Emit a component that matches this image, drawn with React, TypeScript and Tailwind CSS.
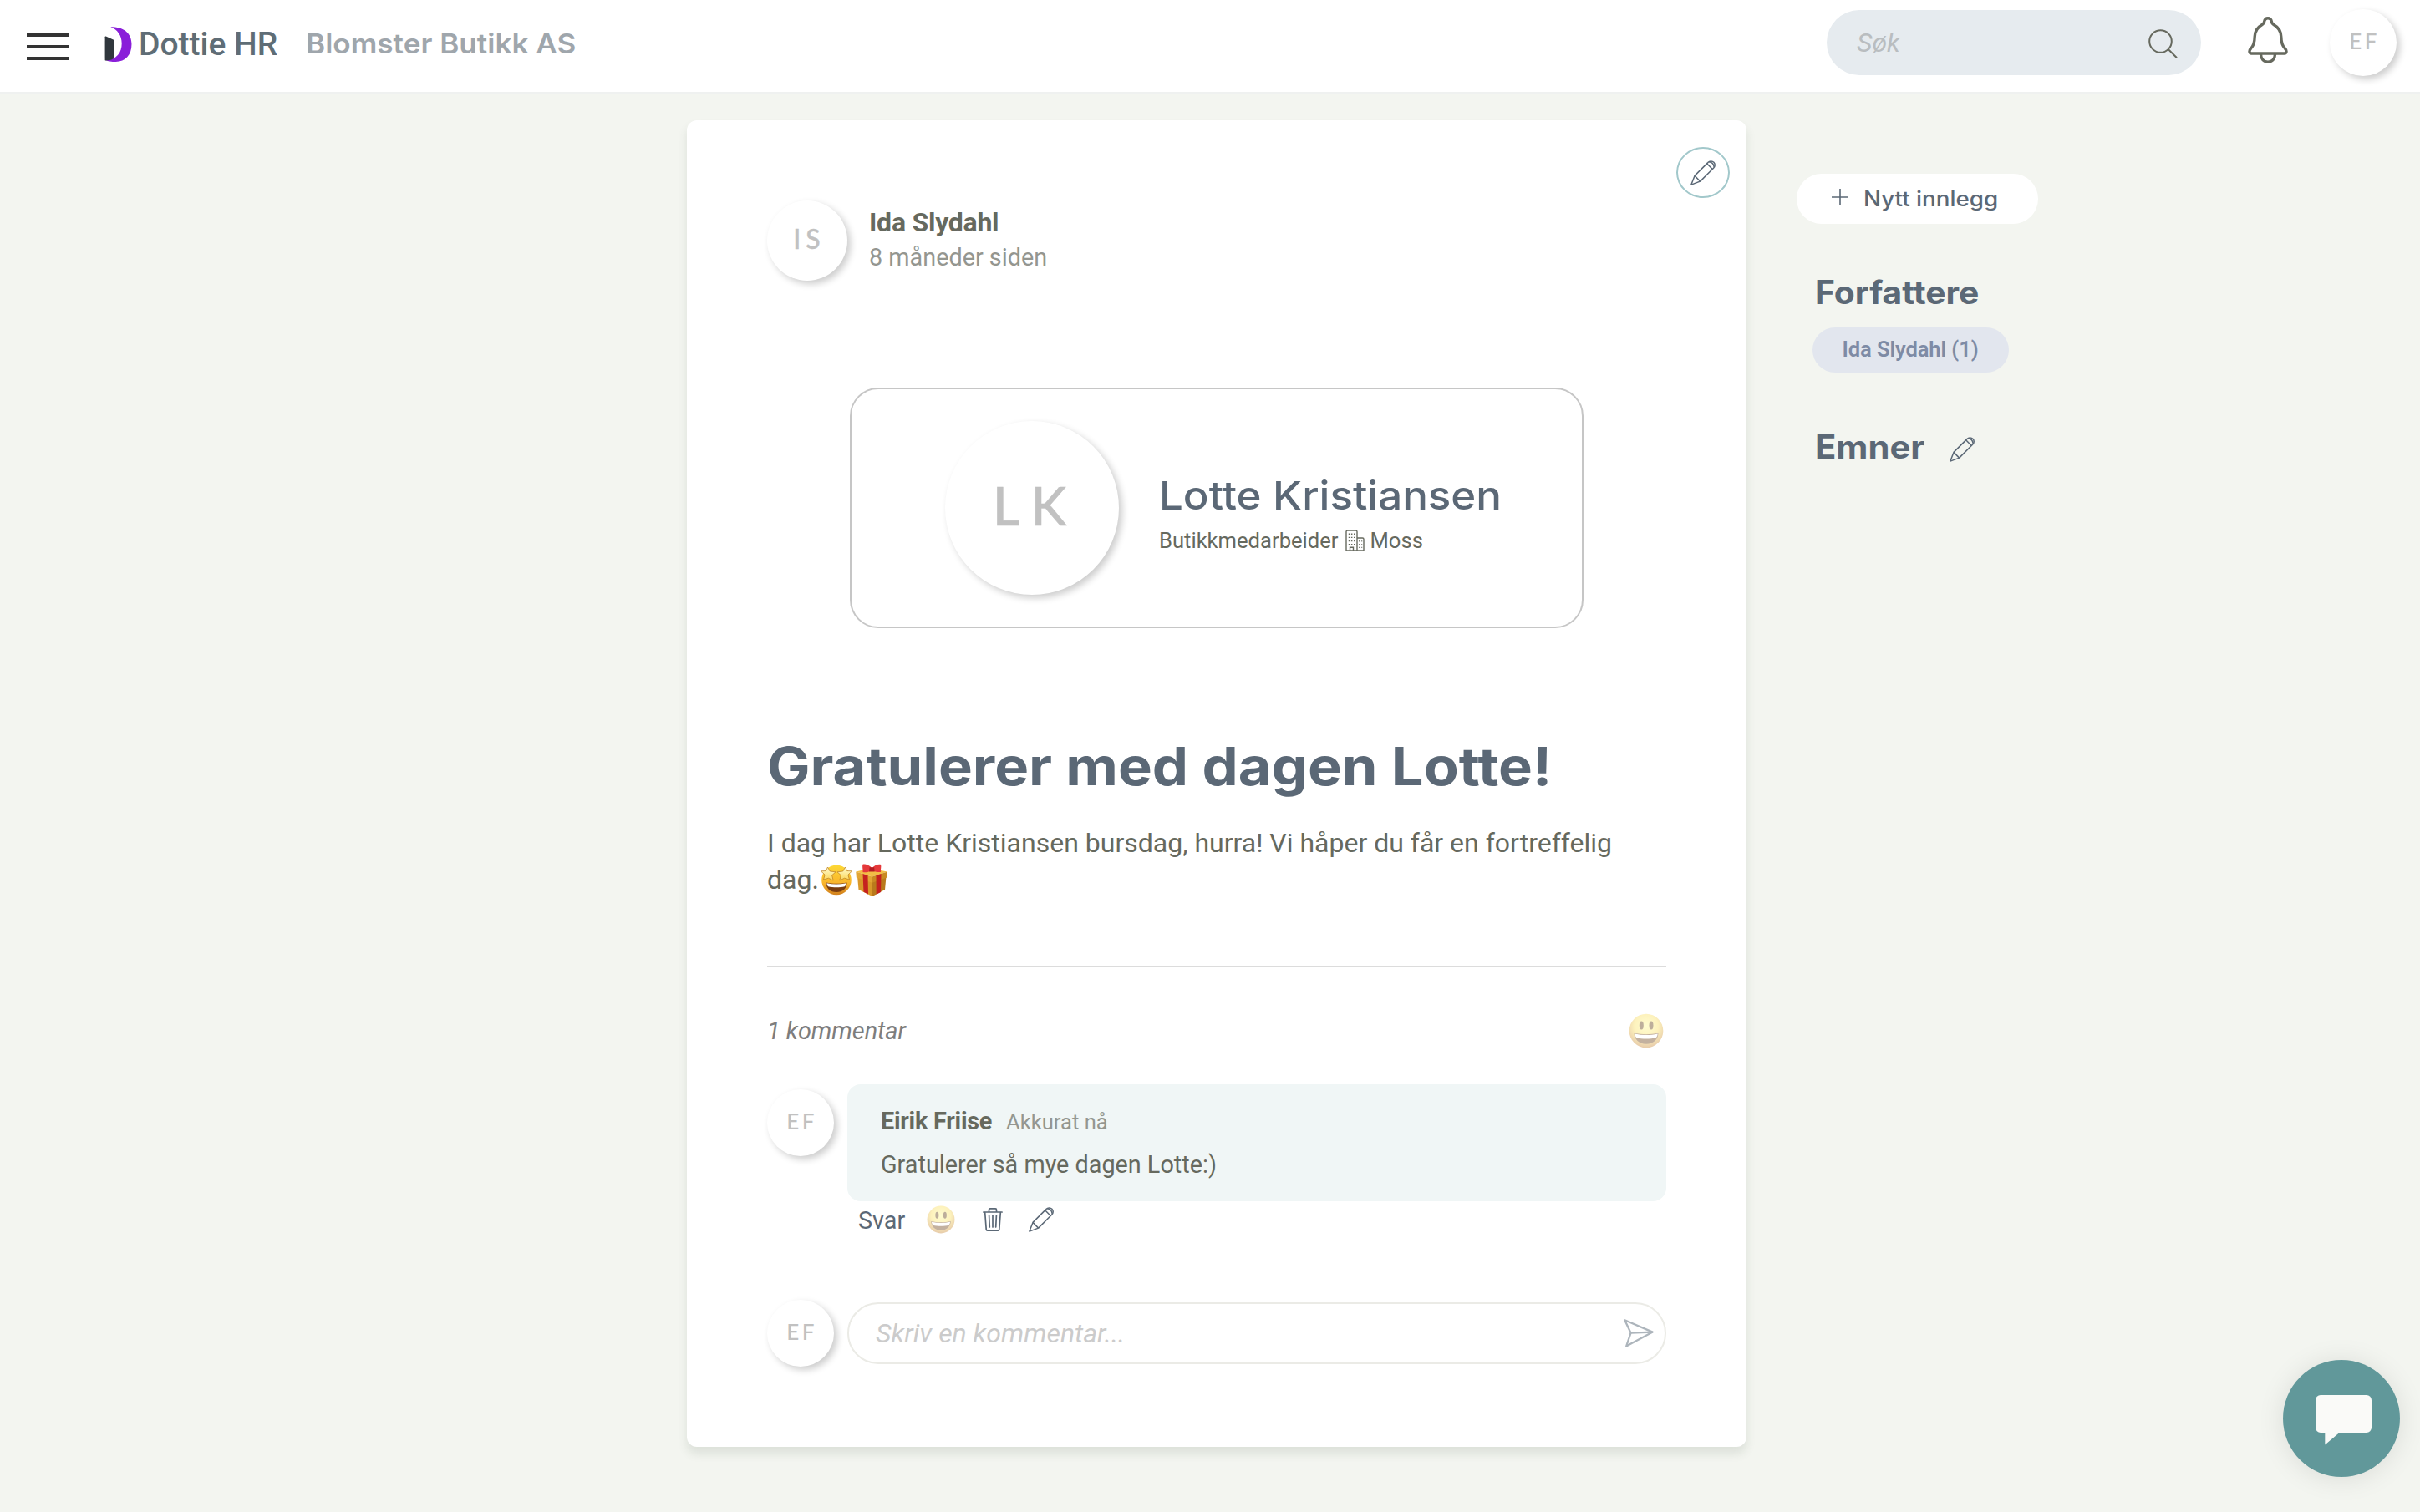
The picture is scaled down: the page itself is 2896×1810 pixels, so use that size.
import clsx from 'clsx'

type IconProps = {
  className?: string
}

const PencilIcon = ({ className }: IconProps) => (
  <svg
    viewBox="0 0 30 30"
    fill="none"
    stroke="currentColor"
    strokeWidth="1.5"
    strokeLinejoin="round"
    className={clsx('size-[30px] shrink-0', className)}
  >
    <path d="M.9 29.1 5 18.4 20.8 2.6C22.9.4 26 .4 27.9 2.3c1.8 1.8 1.8 4.9-.4 7L11.6 25.1Z" />
    <path d="m5 18.4 6.6 6.7M19.6 3.8l6.7 6.7M22.2 1.8c3.3.4 5.5 2.7 6 6" />
  </svg>
)

const BellIcon = ({ className }: IconProps) => (
  <svg
    viewBox="0 0 48 56"
    fill="none"
    stroke="currentColor"
    strokeWidth="3.4"
    strokeLinejoin="round"
    className={className}
  >
    <path d="M24 1.8c-2.7 0-4 2-4.5 4.6-.3 1.4-.9 2-2 2.8C11 12.8 8.3 17 8.2 24c-.1 7-.9 10.5-4.6 14-2.5 2.8-2 6 .6 6h39.6c2.6 0 3.1-3.2.6-6-3.7-3.5-4.5-7-4.6-14-.1-7-2.8-11.2-9.3-14.8-1.1-.8-1.7-1.4-2-2.8C28 3.8 26.7 1.8 24 1.8Z" />
    <path d="M15.5 45c0 5.5 3.5 9.3 8.5 9.3s8.5-3.8 8.5-9.3" />
  </svg>
)

const SearchIcon = ({ className }: IconProps) => (
  <svg
    viewBox="0 0 35 35"
    fill="none"
    stroke="currentColor"
    strokeWidth="2"
    strokeLinecap="round"
    className={className}
  >
    <circle cx="14.5" cy="14.5" r="13.3" />
    <path d="m24 24.2 9.5 9.6" />
  </svg>
)

const TrashIcon = ({ className }: IconProps) => (
  <svg
    viewBox="0 0 24 28"
    fill="none"
    stroke="currentColor"
    strokeWidth="1.7"
    strokeLinecap="round"
    strokeLinejoin="round"
    className={className}
  >
    <path d="M.9 5h22.2M7.5 4.6V2.2c0-.8.5-1.3 1.3-1.3h6.4c.8 0 1.3.5 1.3 1.3v2.4" />
    <path d="M2.7 5.5 4.2 25.6c.1 1 .7 1.5 1.5 1.5h12.6c.8 0 1.4-.5 1.5-1.5L21.3 5.5" />
    <path d="m7.6 9 .7 14M12 9v14M16.4 9l-.7 14" />
  </svg>
)

const SendIcon = ({ className }: IconProps) => (
  <svg
    viewBox="0 0 36 34"
    fill="none"
    stroke="currentColor"
    strokeWidth="2.3"
    strokeLinejoin="round"
    className={className}
  >
    <path d="M1.3 1.3 34.7 15.6 3.2 32.5 8.5 16.6Z" />
    <path d="m8.5 16.6 26.2-1" />
  </svg>
)

const BuildingIcon = ({ className }: IconProps) => (
  <svg
    viewBox="0 0 23 26"
    fill="none"
    stroke="currentColor"
    strokeWidth="1.4"
    className={className}
  >
    <path d="M1 25V2.5C1 1.5 1.5 1 2.5 1h10c1 0 1.5.5 1.5 1.5V25M14 10h6.5c1 0 1.5.5 1.5 1.5V25H.7M5.5 25v-3.8h4V25" />
    <path
      d="M3.8 5.2h7.8M3.8 9.4h7.8M3.8 13.6h7.8M3.8 17.8h7.8M16.2 13.8h4M16.2 17.6h4M16.2 21.4h4"
      strokeDasharray="1.5 1.6"
    />
  </svg>
)

const DottieLogo = ({ className }: IconProps) => (
  <svg viewBox="0 0 34 42" className={className}>
    <path
      fill="#8a1fd9"
      d="M7.3.2C23 .2 32.5 7.5 32.5 20.8 32.5 34 25 42 13.5 42 8.5 42 4 41.3 1.2 40.5 14.5 39.8 20.7 31 20.7 20 20.7 10 15.5 3.5 7.3.2Z"
    />
    <path
      fill="#30373d"
      d="M.6 12.3c0-.8.5-1.1 1.2-.8l9.3 4.3c.6.3.9.7.9 1.3v20.2C9.5 39.5 6.5 40.6 2 40.6c-.9 0-1.4-.4-1.4-1.2Z"
    />
  </svg>
)

const SmileEmoji = ({ className }: IconProps) => (
  <svg viewBox="0 0 42 42" className={clsx('opacity-40', className)}>
    <defs>
      <radialGradient id="smile" cx="50%" cy="36%" r="64%">
        <stop offset="0" stopColor="#fff98c" />
        <stop offset=".55" stopColor="#fbdf5a" />
        <stop offset="1" stopColor="#c47f2c" />
      </radialGradient>
    </defs>
    <circle cx="21" cy="21" r="20.3" fill="url(#smile)" />
    <ellipse cx="15.3" cy="14.5" rx="2.5" ry="5" fill="#5c3608" />
    <ellipse cx="27" cy="14.5" rx="2.5" ry="5" fill="#5c3608" />
    <path
      d="M6.5 23.5c9 2.2 20 2.2 29 0 0 7.5-6 13.3-14.5 13.3S6.5 31 6.5 23.5Z"
      fill="#6b3f12"
    />
    <path
      d="M7.3 24.4c9 2 18.500 2 27.4 0-.3 2.5-1 4-2.2 4.8-6.5 1.8-16.5 1.8-23 0-1.2-.8-1.9-2.3-2.2-4.8Z"
      fill="#fff"
    />
  </svg>
)

const StarEyesEmoji = ({ className }: IconProps) => (
  <svg viewBox="0 0 38 38" className={className}>
    <defs>
      <linearGradient id="star-face" x1="0" y1="0" x2="0" y2="1">
        <stop offset="0" stopColor="#fdd835" />
        <stop offset=".6" stopColor="#f9b52c" />
        <stop offset="1" stopColor="#d07f1c" />
      </linearGradient>
      <linearGradient id="star-eye" x1="0" y1="0" x2="0" y2="1">
        <stop offset="0" stopColor="#fffbd0" />
        <stop offset="1" stopColor="#fbd75a" />
      </linearGradient>
    </defs>
    <circle cx="19" cy="19.5" r="17.8" fill="url(#star-face)" />
    <path
      d="M6.5 22.5c8 1.8 17 1.8 25 0C31.5 29.5 26.5 34 19 34S6.5 29.5 6.5 22.5Z"
      fill="#7a3d10"
    />
    <path
      d="M7.4 23.3c8 1.6 15.2 1.6 23.2 0-.2 2-.8 3.3-1.8 3.9-6 1.5-13.6 1.5-19.6 0-1-.6-1.6-1.9-1.8-3.9Z"
      fill="#fff"
    />
    <path
      d="m8.5 4 2.7 5 6.8.8-4.4 4 1.6 6.2-5.8-2.8L3.5 19l1.7-5.8L.3 8.7l6-.1ZM29.5 4l-2.7 5-6.8.8 4.4 4-1.6 6.2 5.8-2.8 5.9 1.8-1.7-5.8 4.9-4.5-6-.1Z"
      fill="url(#star-eye)"
      stroke="#b87a22"
      strokeWidth=".7"
      strokeLinejoin="round"
    />
  </svg>
)

const GiftEmoji = ({ className }: IconProps) => (
  <svg viewBox="0 0 38 39" className={className}>
    <path d="M2 15 20 22v17L3.5 31Z" fill="#d9982a" />
    <path d="M36.5 15 20 22v17l15-8Z" fill="#b97a1c" />
    <path d="M.3 9.5 17 5.5l21 4-18.3 6Z" fill="#f2bd45" />
    <path d="M.3 9.5 19.7 15.5v7.2L.8 16.5Z" fill="#e2a534" />
    <path d="M38 9.5 19.7 15.5v7.2l17.7-6.2Z" fill="#c98a22" />
    <path d="m8.5 12 6 2 .5 22.5-5.5-2.7ZM24.5 14l6-2-.5 22-5.3 2.8Z" fill="#c5221f" />
    <path
      d="M19.5 5.5C17 2 11 0 8.5.8c-1 2.2.4 6.2 0 9.2 4 1 8-.2 11-2.5 3 1.8 6 3 10.5 2.5-.5-3 1-6.5 0-9C27 0 22 2 19.5 5.5Z"
      fill="#e5393b"
    />
    <path d="M16.5 4.3h5.6l.6 5.2h-6.6Z" fill="#b31b21" />
  </svg>
)

type AvatarProps = {
  initials: string
  size?: 'sm' | 'md' | 'lg'
  className?: string
}

const avatarSizes = {
  sm: 'size-20 text-[26px] tracking-[3.5px] pl-[3px] pb-[3px]',
  md: 'size-24 text-[32px] tracking-[6px] pl-[5px] pb-[4px] [-webkit-text-stroke:0.4px_#c1c1c1]',
  lg: 'size-[208px] text-[64px] tracking-[13px] pl-[7px] pb-[6px] [-webkit-text-stroke:0.5px_#c1c1c1]',
}

const Avatar = ({ initials, size = 'sm', className }: AvatarProps) => (
  <div
    className={clsx(
      'flex shrink-0 items-center justify-center rounded-full bg-white font-[Lato,sans-serif] font-medium text-[#c1c1c1] shadow-[4px_4px_8px_rgba(0,0,0,0.2)]',
      avatarSizes[size],
      className
    )}
  >
    {initials}
  </div>
)

const Header = () => (
  <header className="flex h-[112px] items-start border-b-2 border-[#eff1f0] bg-white pr-7 pl-8">
    <button type="button" aria-label="Meny" className="mt-10 flex flex-col gap-2.5">
      <span className="h-1 w-[50px] bg-[#333]" />
      <span className="h-1 w-[50px] bg-[#333]" />
      <span className="h-1 w-[50px] bg-[#333]" />
    </button>
    <DottieLogo className="mt-8 ml-[43px] h-[42px] w-[34px]" />
    <span className="mt-[29px] ml-[7px] w-[167px] text-[39px] leading-[48px] font-medium whitespace-nowrap text-[#5f6d76]">
      Dottie HR
    </span>
    <span className="mt-[33px] ml-[33px] origin-left scale-x-[1.097] font-[Inter,sans-serif] text-[32px] leading-10 font-semibold whitespace-nowrap text-[#9fa6ac]">
      Blomster Butikk AS
    </span>

    <div className="mt-3 ml-auto flex h-[78px] w-[448px] items-center justify-between rounded-full bg-[#e6ebef] pr-7 pl-9">
      <span className="text-[32px] text-[#b9bdc0] italic">Søk</span>
      <SearchIcon className="mt-[3px] size-[35px] text-[#66695e]" />
    </div>
    <BellIcon className="mt-5 ml-14 h-14 w-12 text-[#66695e]" />
    <Avatar initials="EF" className="mt-[11px] ml-[50px]" />
  </header>
)

const BirthdayCard = () => (
  <div className="mt-32 ml-[99px] flex h-72 w-[878px] items-start rounded-[34px] border-2 border-[#c6c6c6] pl-[112px]">
    <Avatar initials="LK" size="lg" className="mt-[38px]" />
    <div className="mt-[98px] ml-12 whitespace-nowrap">
      <h2 className="w-fit origin-left scale-x-[1.086] font-[Inter,sans-serif] text-[47px] leading-[58px] font-medium text-[#5b6876]">
        Lotte Kristiansen
      </h2>
      <p className="flex items-center text-[25.6px] leading-[50px]">
        Butikkmedarbeider
        <BuildingIcon className="mr-[7px] ml-2 h-[26px] w-[23px]" />
        Moss
      </p>
    </div>
  </div>
)

const Comment = () => (
  <div className="mt-[43px] flex items-start gap-4">
    <Avatar initials="EF" className="mt-1.5" />
    <div className="flex-1">
      <div className="h-[140px] rounded-2xl bg-[#f0f6f6] px-10 pt-6">
        <div className="flex items-baseline text-[28.8px] leading-[41px]">
          <span className="font-bold tracking-[-0.25px]">Eirik Friise</span>
          <span className="ml-[17px] text-[25.6px] text-[#949690]">Akkurat nå</span>
        </div>
        <p className="mt-2.5 text-[28.8px] leading-10">Gratulerer så mye dagen Lotte:)</p>
      </div>
      <div className="flex h-11 items-center pl-[13px] text-[#5b6876]">
        <span className="w-[82px] pt-[3px] text-[28.8px]">Svar</span>
        <SmileEmoji className="size-[34px]" />
        <TrashIcon className="ml-[33px] h-7 w-6" />
        <PencilIcon className="ml-[31px]" />
      </div>
    </div>
  </div>
)

const CommentField = () => (
  <div className="mt-[74px] flex items-center gap-4">
    <Avatar initials="EF" />
    <div className="flex h-[74px] flex-1 items-center justify-between rounded-full border-2 border-[#ebebe6] pr-[13px] pl-8">
      <span className="text-[32px] text-[#cbcbcb] italic">Skriv en kommentar...</span>
      <SendIcon className="h-[34px] w-9 text-[#adb5bc]" />
    </div>
  </div>
)

const Post = () => (
  <article className="relative mt-8 h-[1588px] w-[1268px] rounded-xl bg-white px-24 pt-24 shadow-[0_8px_12px_rgba(60,80,60,0.12)]">
    <button
      type="button"
      aria-label="Rediger"
      className="absolute top-8 right-5 flex h-[61px] w-16 items-center justify-center rounded-[50%] border-2 border-[#a2c8cb] text-[#5b6876]"
    >
      <PencilIcon />
    </button>

    <div className="flex">
      <Avatar initials="IS" size="md" />
      <div className="ml-[26px] pt-[5px] leading-[42px]">
        <p className="text-[32px] font-bold tracking-[-0.25px]">Ida Slydahl</p>
        <p className="text-[28.8px] text-[#949690]">8 måneder siden</p>
      </div>
    </div>

    <BirthdayCard />

    <h1 className="mt-[125px] w-fit origin-left scale-x-[1.09] font-[Inter,sans-serif] text-[63px] leading-20 font-bold whitespace-nowrap text-[#5b6876]">
      Gratulerer med dagen Lotte!
    </h1>
    <p className="mt-[30px] text-[32px] leading-11">
      I dag har Lotte Kristiansen bursdag, hurra! Vi håper du får en fortreffelig
      <span className="flex h-11 items-center">
        dag.
        <StarEyesEmoji className="ml-0.5 size-[38px]" />
        <GiftEmoji className="ml-1 h-[39px] w-[38px]" />
      </span>
    </p>

    <hr className="mt-[81px] border-t-2 border-[#dcdcdc]" />

    <div className="mt-[55px] flex h-[42px] items-center justify-between pr-[3px]">
      <span className="pt-0.5 text-[28.8px] text-[#7d7d7d] italic">1 kommentar</span>
      <SmileEmoji className="size-[42px]" />
    </div>

    <Comment />
    <CommentField />
  </article>
)

type SectionTitleProps = {
  title: string
  className?: string
}

const SectionTitle = ({ title, className }: SectionTitleProps) => (
  <h3
    className={clsx(
      'w-fit origin-left font-[Inter,sans-serif] text-[39px] leading-12 font-bold whitespace-nowrap text-[#5b6876]',
      className
    )}
  >
    {title}
  </h3>
)

const Sidebar = () => (
  <aside className="ml-15 w-[300px] pt-24 text-[#5b6876]">
    <button
      type="button"
      className="flex h-[60px] w-[289px] items-center rounded-full bg-white pl-[42px] font-[Inter,sans-serif] text-[25px] font-medium whitespace-nowrap"
    >
      <svg
        viewBox="0 0 20 20"
        stroke="currentColor"
        strokeWidth="1.6"
        className="mr-[18px] mb-1 size-5"
      >
        <path d="M10 0v20M0 10h20" />
      </svg>
      <span className="origin-left scale-x-[1.11] pt-px">Nytt innlegg</span>
    </button>

    <div className="mt-[58px] ml-[22px]">
      <SectionTitle title="Forfattere" className="scale-x-[1.045]" />
    </div>
    <span className="mt-[18px] ml-[19px] flex h-[54px] w-[235px] items-center justify-center rounded-full bg-[#e2e6ee] pr-px pb-0.5 text-[25.6px] font-semibold tracking-[-0.1px] whitespace-nowrap text-[#7e8ba5]">
      Ida Slydahl (1)
    </span>
    <div className="mt-[65px] ml-[22px] flex items-center">
      <SectionTitle title="Emner" className="scale-x-[1.07]" />
      <PencilIcon className="mt-1.5 ml-[38px]" />
    </div>
  </aside>
)

const ChatButton = () => (
  <button
    type="button"
    aria-label="Chat"
    className="fixed right-6 bottom-[42px] flex size-[140px] items-center justify-center rounded-full bg-[#61989a] shadow-[0_2px_32px_rgba(0,0,0,0.1)]"
  >
    <svg viewBox="0 0 67 60" fill="#fafaf8" className="mt-1 ml-1 h-[60px] w-[67px]">
      <path d="M6 0h55a6 6 0 0 1 6 6v33a6 6 0 0 1-6 6H28.5L11.3 59.5V45H6a6 6 0 0 1-6-6V6a6 6 0 0 1 6-6Z" />
    </svg>
  </button>
)

export default function App() {
  return (
    <div className="h-[1810px] w-[2896px] overflow-hidden bg-[#f3f5f0] font-[Roboto,sans-serif] text-[#66695e]">
      <Header />
      <main className="flex items-start pl-[822px]">
        <Post />
        <Sidebar />
      </main>
      <ChatButton />
    </div>
  )
}
